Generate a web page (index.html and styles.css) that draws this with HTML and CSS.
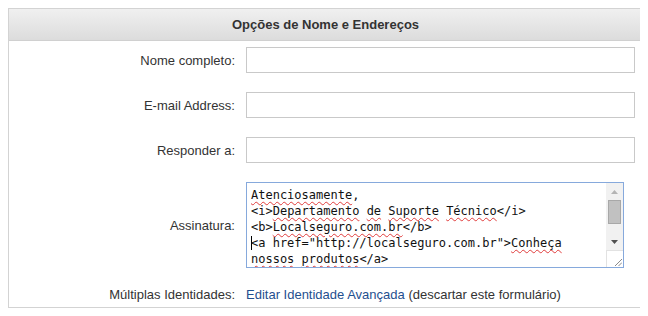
FILE: index.html
```html
<!DOCTYPE html>
<html lang="pt-BR">
<head>
  <meta charset="UTF-8" />
  <title>Opções de Nome e Endereços</title>
  <link rel="stylesheet" href="styles.css">
</head>
<body>

<div class="panel">
  <div class="panel-head">Opções de Nome e Endereços</div>

  <form class="form-grid" autocomplete="off">
    <label for="fullName">Nome completo:</label>
    <input type="text" id="fullName" class="field" />

    <label for="email">E-mail Address:</label>
    <input type="text" id="email" class="field" />

    <label for="replyTo">Responder a:</label>
    <input type="text" id="replyTo" class="field" />

    <label>Assinatura:</label>
    <div class="sig-box">
      <div class="sig-text"><span class="sp">Atenciosamente</span>,
&lt;i&gt;<span class="sp">Departamento</span> <span class="sp">de</span> <span class="sp">Suporte</span> <span class="sp">Técnico</span>&lt;/i&gt;
&lt;b&gt;<span class="sp">Localseguro.com.br</span>&lt;/b&gt;
<span class="caret"></span>&lt;a href="http://localseguro.com.br"&gt;<span class="sp">Conheça</span>
<span class="sp">nossos</span> <span class="sp">produtos</span>&lt;/a&gt;</div>
      <div class="sig-scroll">
        <div class="sb-btn">
          <svg width="7" height="4" viewBox="0 0 7 4"><path d="M0 4 L3.5 0 L7 4 Z" fill="#b4b4b4"/></svg>
        </div>
        <div class="sb-thumb"></div>
        <div class="sb-track"></div>
        <div class="sb-btn">
          <svg width="7" height="4" viewBox="0 0 7 4"><path d="M0 0 L7 0 L3.5 4 Z" fill="#505050"/></svg>
        </div>
        <div class="sb-corner">
          <svg width="8" height="8" viewBox="0 0 8 8"><path d="M1 8 L8 1 M4.5 8 L8 4.5" stroke="#8a8a8a" stroke-width="1"/></svg>
        </div>
      </div>
    </div>

    <span class="label">Múltiplas Identidades:</span>
    <span class="ident">
      <a href="#" class="ident-link">Editar Identidade Avançada</a> (descartar este formulário)
    </span>
  </form>
</div>

</body>
</html>
```

FILE: styles.css
```css
body {
  margin: 8px;
  background: #fff;
  font-family: 'Liberation Sans', Arial, sans-serif;
  font-size: 13px;
  color: #333;
}

.panel {
  width: 633px;
  border: 1px solid #d3d3d3;
}

.panel-head {
  height: 31px;
  line-height: 31px;
  text-align: center;
  font-weight: 700;
  color: #333;
  background: linear-gradient(#f0f0f0, #dcdcdc);
  border-bottom: 1px solid #d0d0d0;
}

/* ฟอร์ม */
.form-grid {
  display: grid;
  grid-template-columns: 226px 389px;
  column-gap: 11px;
  row-gap: 19px;
  padding: 6px 0 5px 0;
  margin: 0;
}
.form-grid label, .form-grid .label {
  align-self: center;
  text-align: right;
}

.field {
  box-sizing: border-box;
  width: 389px;
  height: 26px;
  margin: 0;
  border: 1px solid #c9c9c9;
  font-family: 'Liberation Sans', Arial, sans-serif;
  font-size: 13px;
  padding: 2px 4px;
}

/* กล่องลายเซ็น */
.sig-box {
  box-sizing: border-box;
  width: 378px;
  height: 86px;
  border: 1px solid #86a9dc;
  display: flex;
  background: #fff;
}
.sig-text {
  flex: 1;
  padding: 4px 0 0 4px;
  font-family: 'DejaVu Sans Mono', 'Liberation Mono', monospace;
  font-size: 12px;
  line-height: 16px;
  color: #111;
  white-space: pre;
  overflow: hidden;
}
.sp {
  text-decoration: underline wavy #e03c3c;
  text-decoration-thickness: 1px;
  text-underline-offset: 2px;
}
.caret {
  border-left: 1px solid #000;
  margin-right: -1px;
}

.sig-scroll {
  width: 17px;
  display: flex;
  flex-direction: column;
  background: #f1f1f1;
}
.sb-btn {
  height: 17px;
  display: flex;
  align-items: center;
  justify-content: center;
}
.sb-thumb {
  height: 22px;
  margin: 0 2px;
  background: #c1c1c1;
  border: 1px solid #a8a8a8;
}
.sb-track { flex: 1; }
.sb-corner {
  height: 17px;
  background: #fff;
  border-top: 1px solid #e2e2e2;
  border-left: 1px solid #e2e2e2;
  box-sizing: border-box;
  display: flex;
  align-items: flex-end;
  justify-content: flex-end;
  padding: 0 1px 1px 0;
}

.ident {
  align-self: center;
  line-height: 15px;
}
.ident-link {
  color: #1f4f8f;
  text-decoration: none;
}
```
